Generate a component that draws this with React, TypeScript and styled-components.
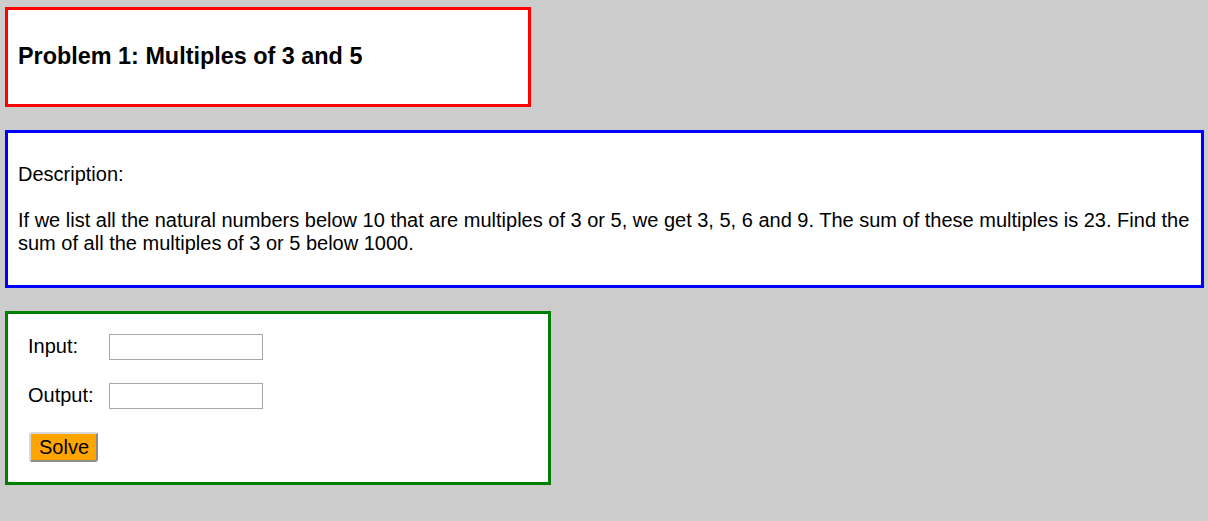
import React from "react";
import styled, { createGlobalStyle } from "styled-components";

const GlobalStyle = createGlobalStyle`
  html, body {
    margin: 0;
    background: #cccccc;
  }
  body {
    padding: 7px 4px 0 5px;
    font-family: "Liberation Sans", Arial, Helvetica, sans-serif;
    color: #000;
  }
`;

const Page = styled.main`
  display: flex;
  flex-direction: column;
  align-items: flex-start;
  gap: 23px;
`;

const Panel = styled.section<{ $color: string; $width?: string }>`
  box-sizing: border-box;
  background: #fff;
  border: 3px solid ${(p) => p.$color};
  width: ${(p) => p.$width ?? "auto"};
  align-self: ${(p) => (p.$width ? "flex-start" : "stretch")};
`;

const TitlePanel = styled(Panel)`
  padding: 33px 10px 34px;
`;

const Title = styled.h2`
  margin: 0;
  font-size: 23.4px;
  line-height: 27px;
  font-weight: bold;
`;

const DescPanel = styled(Panel)`
  padding: 30px 10px 30px;
  font-size: 20px;
  line-height: 23px;
`;

const DescLabel = styled.p`
  margin: 0 0 23px;
`;

const DescText = styled.p`
  margin: 0;
`;

const SolverPanel = styled(Panel)`
  padding: 20px;
  font-size: 20px;
`;

const Form = styled.form`
  display: grid;
  grid-template-columns: 81px 154px;
  grid-template-rows: 26px 26px 30px;
  row-gap: 23px;
  align-items: center;
`;

const Label = styled.label`
  font-size: 20px;
  line-height: 23px;
  margin-top: -1px;
`;

const Field = styled.input`
  box-sizing: border-box;
  width: 154px;
  height: 26px;
  border: 1px solid #a9a9a9;
  background: #fff;
  padding: 2px 4px;
  font-family: inherit;
  font-size: 16px;
  outline: none;
`;

const ButtonRow = styled.div`
  grid-column: 1 / span 2;
  height: 30px;
  display: flex;
  align-items: stretch;
`;

const SolveButton = styled.button`
  box-sizing: border-box;
  height: 30px;
  margin: 0 0 0 1px;
  padding: 0 7px 0 8px;
  background: #ffa500;
  border: 2px solid;
  border-color: #d9d9d9 #8c8c8c #8c8c8c #d9d9d9;
  border-radius: 3px;
  font-family: "Liberation Sans", Arial, sans-serif;
  font-size: 20px;
  line-height: 24px;
  color: #000;
  cursor: pointer;
`;

export default function App() {
  return (
    <>
      <GlobalStyle />
      <Page>
        <TitlePanel $color="#ff0000" $width="526px">
          <Title>Problem 1: Multiples of 3 and 5</Title>
        </TitlePanel>
        <DescPanel $color="#0000ff">
          <DescLabel>Description:</DescLabel>
          <DescText>
            If we list all the natural numbers below 10 that are multiples of 3
            or 5, we get 3, 5, 6 and 9. The sum of these multiples is 23. Find
            the sum of all the multiples of 3 or 5 below 1000.
          </DescText>
        </DescPanel>
        <SolverPanel $color="#008000" $width="546px">
          <Form onSubmit={(e) => e.preventDefault()}>
            <Label htmlFor="input">Input:</Label>
            <Field id="input" type="text" />
            <Label htmlFor="output">Output:</Label>
            <Field id="output" type="text" readOnly />
            <ButtonRow>
              <SolveButton type="submit">Solve</SolveButton>
            </ButtonRow>
          </Form>
        </SolverPanel>
      </Page>
    </>
  );
}
